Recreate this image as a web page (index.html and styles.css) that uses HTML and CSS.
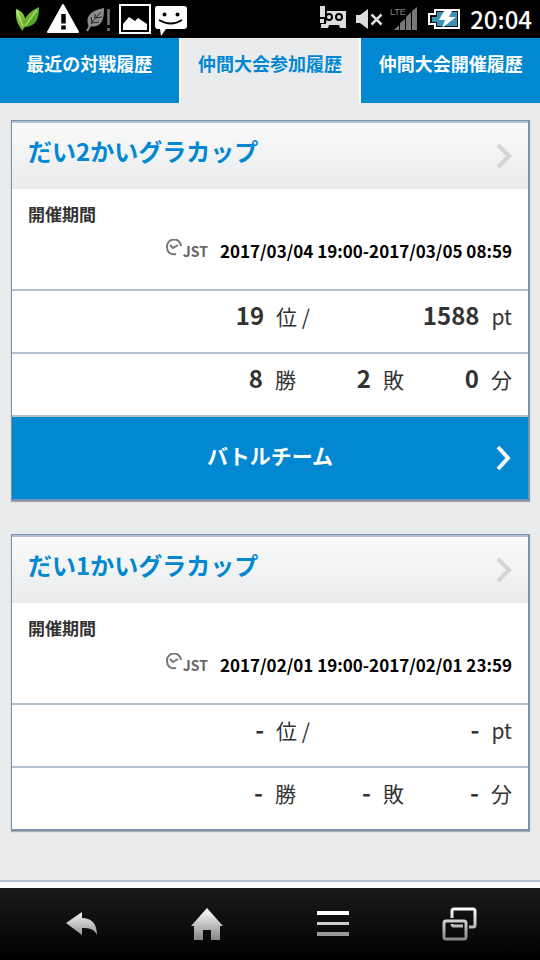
FILE: index.html
```html
<!DOCTYPE html>
<html lang="ja">
<head>
<meta charset="utf-8">
<meta name="viewport" content="width=device-width, initial-scale=1">
<title>仲間大会参加履歴</title>
<link rel="stylesheet" href="styles.css">
</head>
<body>
<header class="status">
  <svg class="status-left" width="200" height="38" viewBox="0 0 200 38" aria-hidden="true">
    <defs>
      <linearGradient id="leaf" x1="0" y1="0" x2="1" y2="1"><stop offset="0" stop-color="#a8dc58"/><stop offset="1" stop-color="#2f8b10"/></linearGradient>
    </defs>
    <path d="M22 31C21 27 15 24 16 9C25 12 27 20 24 26C23 18 30 11 39 7C39 20 36 26 25 27Z" fill="url(#leaf)"/>
    <path d="M17 11L23 27M37 10L25 26" stroke="#d6f39b" stroke-width="1" fill="none"/>
    <path d="M63 5L78 32H48Z" fill="#fff" stroke="#fff" stroke-width="2" stroke-linejoin="round"/>
    <path d="M63.500 14V23.500M63.500 25.500V29.500" stroke="#000" stroke-width="4.500"/>
    <path d="M89 27C84 15 93 10 104 8C104 18 103 27 91 26.500" fill="#8c8c8c"/>
    <path d="M88 31L92 22L101 12M92 22L91 17M95 18L95 14M92 23L99 22M96 18L102 17" stroke="#222" fill="none"/>
    <path d="M87 31L91 24" stroke="#8c8c8c" stroke-width="2"/>
    <path d="M108.500 9V25M108.500 28V31" stroke="#777" stroke-width="2.500"/>
    <rect x="120" y="5" width="30" height="28" fill="none" stroke="#fff" stroke-width="2"/>
    <path d="M123 30V24L129 17L135 21L138 18L147 24V30Z" fill="#fff"/>
    <path d="M157 6H184Q187 6 187 9V26Q187 29 184 29H166L161 36L160 29H158Q155 29 155 26V9Q155 6 157 6Z" fill="#fff"/>
    <circle cx="164.500" cy="14.500" r="2"/><circle cx="177.500" cy="14.500" r="2"/>
    <path d="M159 20Q171 27 182 20" fill="none" stroke="#000" stroke-width="2"/>
  </svg>
  <div class="status-right">
    <svg width="144" height="38" viewBox="320 0 144 38" aria-hidden="true">
      <path d="M322 6H327V17H322ZM322 19H326V23H322ZM329 11H348V28H342L341 25H331L330 28H323V24H328Z" fill="#ddd"/>
      <circle cx="331" cy="17" r="3" fill="#ddd" stroke="#000" stroke-width="2"/><circle cx="341" cy="17" r="3" fill="#ddd" stroke="#000" stroke-width="2"/>
      <path d="M358 15H362L370 9V29L362 23H358Z" fill="#ddd"/>
      <path d="M373.500 14.500L383.500 24.500M383.500 14.500L373.500 24.500" stroke="#ddd" stroke-width="2.500"/>
      <text class="lte" x="392" y="15">LTE</text>
      <path d="M396 30L401 25V30ZM402 30V23L407 19V30ZM408 30V17L413 12V30ZM414 30V11L419 7V30Z" fill="#777"/>
      <path d="M437 10H461V28H437V24H431V14H437Z" fill="#111" stroke="#fff" stroke-width="2"/>
      <path d="M439 12H459V26H439V22H434V17H439Z" fill="#3b91b5"/>
      <path d="M446 11H454L451 17H458L444 28L447 20H441Z" fill="#fff"/>
    </svg>
    <time class="clock">20:04</time>
  </div>
</header>

<nav class="tabs">
  <a class="tab" href="#recent">最近の対戦履歴</a>
  <a class="tab tab-active" href="#joined" aria-current="page">仲間大会参加履歴</a>
  <a class="tab" href="#hosted">仲間大会開催履歴</a>
</nav>

<main class="content">
  <article class="card">
    <a class="card-head" href="#cup2">
      <h2 class="title">だい2かいグラカップ</h2>
      <svg class="chevron" width="16" height="26" viewBox="0 0 16 26" aria-hidden="true"><path d="M2 2L13 13L2 24"/></svg>
    </a>
    <section class="period">
      <h3 class="label">開催期間</h3>
      <p class="dates">
        <svg class="zone-icon" width="18" height="18" viewBox="0 0 18 18" aria-hidden="true"><path d="M16 7A7 7 0 0 0 2 8C2 13 5 16 11 15M5 6L8 9L13 6"/></svg>
        <span class="zone">JST</span>
        <span class="range">2017/03/04 19:00-2017/03/05 08:59</span>
      </p>
    </section>
    <div class="row rank">
      <p class="stat"><b>19</b><span>位 /</span></p>
      <p class="stat"><b>1588</b><span>pt</span></p>
    </div>
    <div class="row record">
      <p class="stat"><b>8</b><span>勝</span></p>
      <p class="stat"><b>2</b><span>敗</span></p>
      <p class="stat"><b>0</b><span>分</span></p>
    </div>
    <a class="team" href="#team">
      <span class="team-text">バトルチーム</span>
      <svg class="chevron" width="16" height="26" viewBox="0 0 16 26" aria-hidden="true"><path d="M2 2L12 13L2 24"/></svg>
    </a>
  </article>

  <article class="card">
    <a class="card-head" href="#cup1">
      <h2 class="title">だい1かいグラカップ</h2>
      <svg class="chevron" width="16" height="26" viewBox="0 0 16 26" aria-hidden="true"><path d="M2 2L13 13L2 24"/></svg>
    </a>
    <section class="period">
      <h3 class="label">開催期間</h3>
      <p class="dates">
        <svg class="zone-icon" width="18" height="18" viewBox="0 0 18 18" aria-hidden="true"><path d="M16 7A7 7 0 0 0 2 8C2 13 5 16 11 15M5 6L8 9L13 6"/></svg>
        <span class="zone">JST</span>
        <span class="range">2017/02/01 19:00-2017/02/01 23:59</span>
      </p>
    </section>
    <div class="row rank">
      <p class="stat"><b>-</b><span>位 /</span></p>
      <p class="stat"><b>-</b><span>pt</span></p>
    </div>
    <div class="row record">
      <p class="stat"><b>-</b><span>勝</span></p>
      <p class="stat"><b>-</b><span>敗</span></p>
      <p class="stat"><b>-</b><span>分</span></p>
    </div>
  </article>
</main>

<footer class="navbar">
  <button class="key" type="button" aria-label="戻る">
    <svg width="36" height="36" viewBox="0 0 36 36">
      <defs><linearGradient id="metal" gradientUnits="userSpaceOnUse" x1="0" y1="3" x2="0" y2="33"><stop offset="0" stop-color="#fff"/><stop offset="1" stop-color="#888"/></linearGradient></defs>
      <path d="M3 17L19 6V12C28 12 34 17 34 29C31 23 27 22 19 22V29Z" fill="url(#metal)"/>
    </svg>
  </button>
  <button class="key" type="button" aria-label="ホーム">
    <svg width="36" height="36" viewBox="0 0 36 36"><path d="M18 2L34 20H31V34H22V24H14V34H5V20H2Z" fill="url(#metal)"/></svg>
  </button>
  <button class="key" type="button" aria-label="メニュー">
    <svg width="36" height="36" viewBox="0 0 36 36"><path d="M2 5H34V9H2Z" fill="#fff"/><path d="M2 16H34V19H2Z" fill="#ccc"/><path d="M2 26H34V30H2Z" fill="#999"/></svg>
  </button>
  <button class="key" type="button" aria-label="履歴">
    <svg width="36" height="36" viewBox="0 0 36 36" fill="none" stroke="url(#metal)" stroke-width="3"><path d="M11 12V5Q11 3 13 3H32Q34 3 34 5V19Q34 21 32 21H28M11 18Q11 20 13 20H22"/><rect x="3" y="15" width="22" height="18" rx="2"/></svg>
  </button>
</footer>
</body>
</html>
```
FILE: styles.css
```css
* { box-sizing: border-box; }

body {
  margin: 0;
  min-height: 100vh;
  display: flex;
  flex-direction: column;
  background: #fff;
  color: #333;
  font-family: "Noto Sans CJK JP", sans-serif;
}

h2, h3, p { margin: 0; }
a { text-decoration: none; }
svg { display: block; flex: none; }

.status {
  height: 38px;
  display: flex;
  justify-content: space-between;
  background: #000;
  color: #fff;
}

.status-right { display: flex; align-items: center; gap: 8px; padding-right: 8px; }
.clock { font-size: 24px; font-weight: 500; line-height: 36px; }
.lte { font: 9px "Liberation Sans", sans-serif; fill: #888; }

.tabs {
  display: grid;
  grid-template-columns: repeat(3, 1fr);
  gap: 2px;
}

.tab {
  height: 65px;
  padding-top: 12px;
  background: #0288d1;
  color: #fff;
  font-size: 18px;
  font-weight: 700;
  line-height: 26px;
  text-align: center;
  white-space: nowrap;
}

.tab-active { background: #eaebed; color: #0288d1; }

.content {
  flex: 1;
  display: flex;
  flex-direction: column;
  gap: 33px;
  padding: 17px 10px 47px 11px;
  background: #eaebed;
  border-bottom: 2px solid #b4c0cc;
}

.card {
  border: solid #7b93b0;
  border-width: 1px 2px 2px 1px;
  background: #fff;
  box-shadow: 0 1px 1px #aaa;
}

.card-head {
  height: 68px;
  display: flex;
  align-items: center;
  justify-content: space-between;
  padding: 0 16px;
  border-top: 2px solid #b4c0d0;
  background: linear-gradient(#fafafa, #e9ebec);
}

.title {
  padding-bottom: 10px;
  color: #0288d1;
  font-size: 24px;
  font-weight: 700;
  line-height: 36px;
}

.chevron { fill: none; stroke: #d4d4d4; stroke-width: 4px; }

.period { height: 100px; padding: 12px 16px 0; }
.label { font-size: 17px; font-weight: 700; line-height: 26px; }

.dates {
  display: flex;
  align-items: center;
  justify-content: flex-end;
  padding-top: 9px;
  line-height: 30px;
  white-space: nowrap;
}

.zone-icon { fill: none; stroke: #777; stroke-width: 2px; margin-bottom: 6px; }
.zone { color: #666; font-size: 14px; font-weight: 700; }
.range { margin-left: 12px; color: #000; font-size: 17px; font-weight: 700; }

.row {
  height: 63px;
  display: flex;
  justify-content: flex-end;
  padding: 6px 16px 0;
  border-top: 2px solid #b4c0cc;
}

.stat {
  display: flex;
  align-items: baseline;
  justify-content: flex-end;
  gap: 12px;
  font-size: 21px;
  line-height: 36px;
}

.stat b { font-size: 24px; }
.rank .stat { width: 202px; }
.record .stat { width: 108px; }

.team {
  height: 84px;
  display: grid;
  grid-template-columns: 1fr auto 1fr;
  align-items: center;
  padding: 0 16px;
  border-top: 2px solid #b4c0cc;
  background: #0288d1;
  color: #fff;
}

.team-text { grid-column: 2; padding-bottom: 6px; font-size: 21px; font-weight: 700; line-height: 32px; }
.team .chevron { justify-self: end; stroke: #f5f5f5; }

.navbar {
  height: 72px;
  margin-top: 6px;
  display: grid;
  grid-template-columns: repeat(4, 1fr);
  padding: 0 18px;
  background: linear-gradient(#1a1a1a, #000);
}

.key {
  display: flex;
  align-items: center;
  justify-content: center;
  padding: 0;
  border: 0;
  background: none;
}
```
